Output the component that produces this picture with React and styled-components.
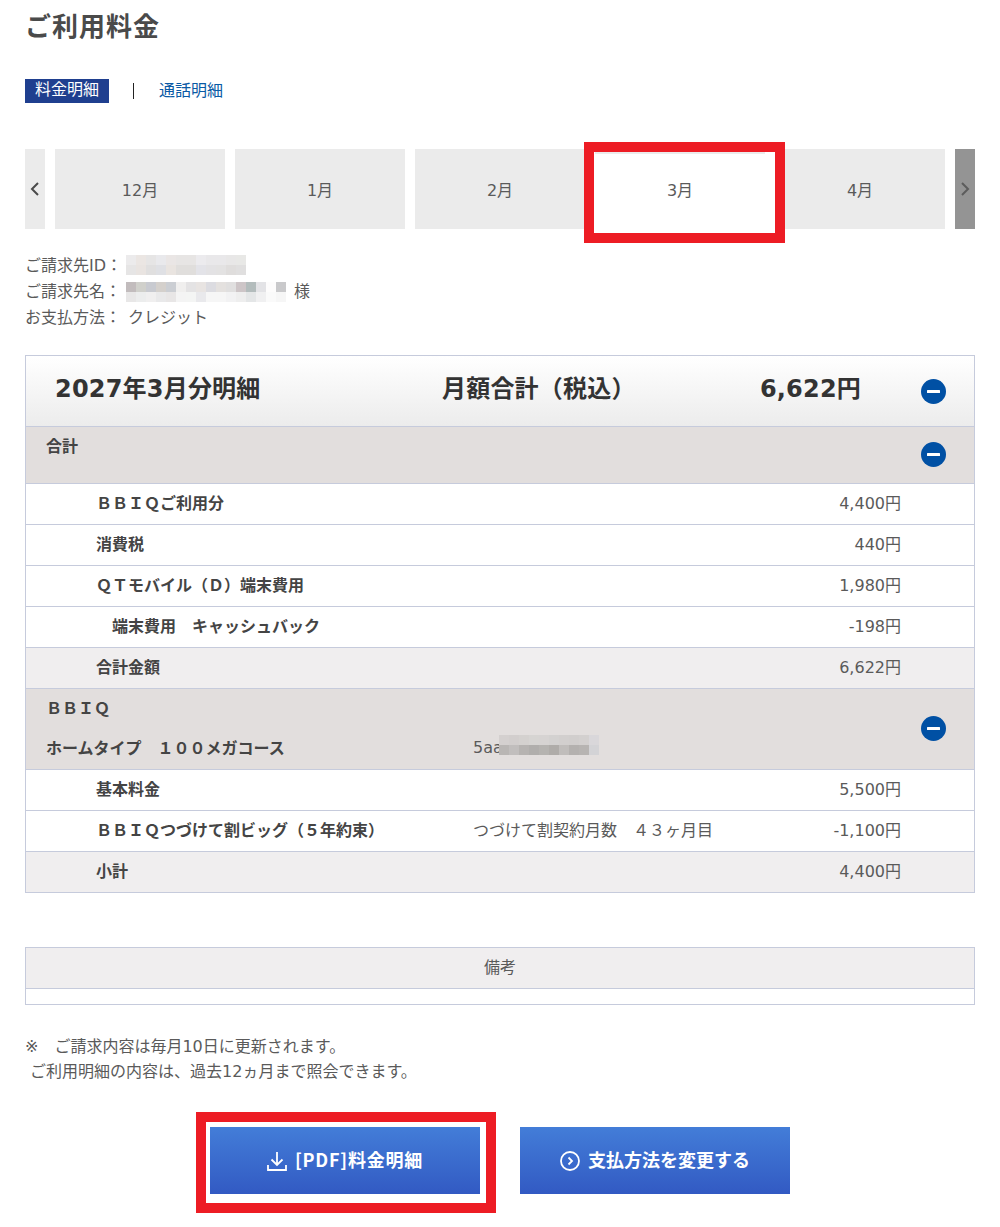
import React from "react";
import styled, { createGlobalStyle } from "styled-components";

const Global = createGlobalStyle`
  html, body { margin: 0; padding: 0; background: #fff; }
  body { font-family: "DejaVu Sans", "Noto Sans CJK JP", sans-serif; font-size: 16px; color: #555; }
`;

const Page = styled.div`
  width: 950px;
  height: 1227px;
  padding: 0 25px;
  overflow: hidden;
  font-family: "DejaVu Sans", "Noto Sans CJK JP", sans-serif;
  box-sizing: content-box;
`;
const Title = styled.h1`
  margin: 0;
  padding-top: 7px;
  height: 79px;
  box-sizing: border-box;
  font-size: 26px;
  line-height: 36px;
  font-weight: 700;
  letter-spacing: 1px;
  color: #4a4a4a;
  font-family: "Noto Sans CJK JP", sans-serif;
`;
const Tabs = styled.div`
  display: flex;
  align-items: center;
  height: 24px;
  font-size: 16px;
`;
const ActiveTab = styled.span`
  background: #1f3f8f;
  color: #fff;
  width: 84px;
  height: 24px;
  line-height: 21px;
  text-align: center;
`;
const Divider = styled.span`
  width: 1px;
  height: 16px;
  background: #222;
  margin: 0 25px 0 24px;
`;
const TabLink = styled.a`
  color: #0a5aa5;
  text-decoration: none;
  padding-bottom: 4px;
`;
const Carousel = styled.div`
  display: flex;
  gap: 10px;
  margin-top: 46px;
  height: 80px;
`;
const Arrow = styled.div`
  width: 20px;
  background: ${(p) => (p.$dark ? "#949494" : "#ebebeb")};
  display: flex;
  align-items: center;
  justify-content: center;
  color: ${(p) => (p.$dark ? "#5c5c5c" : "#4a4a4a")};
`;
const Month = styled.div`
  width: 170px;
  background: #ebebeb;
  display: flex;
  align-items: center;
  justify-content: center;
  font-size: 16px;
  color: #5a5a5a;
`;
const ActiveMonth = styled(Month)`
  position: relative;
  background: linear-gradient(#ebebeb 5px, #fff 5px);
  &::after {
    content: "";
    position: absolute;
    left: -11px;
    top: -7px;
    width: 201px;
    height: 101px;
    box-sizing: border-box;
    border: 10px solid #ed1c24;
  }
`;
const WhiteFill = styled.span`
  position: absolute;
  left: 170px;
  top: 3px;
  width: 10px;
  height: 81px;
  background: #fff;
`;
const Info = styled.div`
  margin-top: 24px;
  font-size: 16px;
  line-height: 26px;
  color: #5a5a5a;
`;
const InfoRow = styled.div`
  display: flex;
  align-items: center;
  height: 26px;
`;
const InfoMask = styled.span`
  display: block;
  margin-bottom: 2px;
`;
const InfoKey = styled.span`
  width: ${(p) => p.$w || 101}px;
  flex: none;
  font-size: 16px;
`;
const Honorific = styled.span`
  margin-left: 8px;
`;
const Panel = styled.div`
  margin-top: 24px;
  border: 1px solid #c6cbdc;
  border-bottom: 0;
`;
const PanelHead = styled.div`
  height: 70px;
  border-bottom: 1px solid #c6cbdc;
  background: linear-gradient(#ffffff, #ececec);
  display: grid;
  grid-template-columns: 387px 289px 130px 1fr;
  align-items: center;
  padding-left: 29px;
  font-size: 24px;
  font-weight: 700;
  color: #333;
  letter-spacing: 0.2px;
`;
const HeadCell = styled.div`
  padding-bottom: 9px;
  white-space: nowrap;
  text-align: ${(p) => (p.$right ? "right" : "left")};
`;
const IconCell = styled.div`
  display: flex;
  justify-content: flex-end;
  padding-right: 28px;
`;
const GroupRow = styled.div`
  position: relative;
  height: ${(p) => p.$h}px;
  background: #e2dedd;
  border-bottom: 1px solid #c6cbdc;
  padding-left: 20px;
  box-sizing: content-box;
  font-weight: 700;
  font-size: 16px;
  color: #444;
`;
const GroupLine = styled.div`
  display: grid;
  grid-template-columns: 427px 1fr;
  height: 40px;
  padding-bottom: 4px;
  box-sizing: border-box;
  align-items: center;
`;
const Addr = styled.span`
  display: flex;
  align-items: center;
  font-weight: 400;
  color: #5a5a5a;
`;
const AddrMask = styled.span`
  display: block;
  margin-left: -4px;
  margin-bottom: 4px;
`;
const MinusWrap = styled.span`
  position: absolute;
  right: 28px;
  top: ${(p) => p.$top}px;
  display: flex;
`;
const Row = styled.div`
  display: grid;
  grid-template-columns: ${(p) => 447 - (p.$indent ? 86 : 70)}px 1fr auto;
  height: 41px;
  box-sizing: border-box;
  align-items: center;
  padding: 0 73px 5px ${(p) => (p.$indent ? 86 : 70)}px;
  background: ${(p) => (p.$total ? "#f0eeef" : "#fff")};
  border-bottom: 1px solid #c6cbdc;
`;
const Label = styled.span`
  font-weight: 700;
  color: #444;
  white-space: nowrap;
`;
const Note = styled.span`
  color: #5a5a5a;
  white-space: nowrap;
`;
const Price = styled.span`
  color: #5a5a5a;
  white-space: nowrap;
`;
const Remarks = styled.div`
  margin-top: 54px;
  border: 1px solid #c6cbdc;
`;
const RemarksHead = styled.div`
  height: 40px;
  line-height: 40px;
  background: #f0eeef;
  border-bottom: 1px solid #c6cbdc;
  text-align: center;
  color: #5a5a5a;
`;
const RemarksBody = styled.div`
  height: 15px;
`;
const Notes = styled.div`
  margin-top: 29px;
  line-height: 25px;
  color: #5a5a5a;
  white-space: pre;
`;
const Actions = styled.div`
  display: flex;
  gap: 40px;
  margin-top: 43px;
  padding-left: 185px;
`;
const Button = styled.a`
  position: relative;
  width: 270px;
  height: 67px;
  display: flex;
  align-items: center;
  justify-content: center;
  gap: 8px;
  background: linear-gradient(#437dd8, #325ac3);
  color: #fff;
  font-family: "Noto Sans CJK JP", sans-serif;
  font-weight: 700;
  font-size: 18px;
  letter-spacing: ${(p) => p.$track || 0}px;
  padding-bottom: 4px;
  box-sizing: border-box;
`;
const Callout = styled.span`
  position: absolute;
  left: -14px;
  top: -15px;
  width: 300px;
  height: 101px;
  box-sizing: border-box;
  border: 10px solid #ed1c24;
`;
const ButtonIcon = styled.svg`
  flex: none;
  margin-top: 4px;
`;

const Minus = () => (
  <svg width="25" height="25" viewBox="0 0 25 25" aria-hidden="true">
    <circle cx="12.5" cy="12.5" r="12.5" fill="#0050a4" />
    <rect x="6" y="11" width="13" height="3" rx="0.5" fill="#fff" />
  </svg>
);
const Chevron = ({ right }) => (
  <svg width="12" height="16" viewBox="0 0 12 16" aria-hidden="true">
    <path d={right ? "M3 2l6 6-6 6" : "M9 2L3 8l6 6"} fill="none" stroke="currentColor" strokeWidth="2" />
  </svg>
);
const Mosaic = ({ rows, size = 10 }) => (
  <svg
    width={Math.max(...rows.map((r) => r.length)) * size}
    height={rows.length * size}
    style={{ display: "block", flex: "none" }}
    aria-hidden="true"
  >
    {rows.map((r, y) =>
      r.map((c, x) => <rect key={x} x={x * size} y={y * size} width={size} height={size} fill={c} />)
    )}
  </svg>
);

const idTiles = [
  ["#ecebec", "#ebe6e3", "#e6e5e5", "#e9e9ec", "#eae6e5", "#e7e5e4", "#e7e5e4", "#ecebee", "#e9e8ea", "#e9e8ea", "#e8e7e7", "#e8e8e6"],
  ["#e6e5e5", "#e9e4e1", "#e0dfdf", "#dfe0e4", "#e9e4e0", "#e0dedc", "#e0dedc", "#e3e3e8", "#e3e2e4", "#e3e2e2", "#dfdddc", "#e0dfdf"],
];
const nameTiles = [
  ["#c2bcbd", "#d0d0cb", "#c8cad0", "#d4d0cc", "#cbced3", "#f0efee", "#e4e3e4", "#e8e4e2", "#dcdce1", "#e4e1df", "#e0dfdf", "#cdc5c7", "#b3bcbc", "#e3e3e6", "#fdfcfc", "#c9c9cb"],
  ["#e8e7e7", "#eceded", "#f0efef", "#e9e9ea", "#e8e6e6", "#f4f4f4", "#f4f5f4", "#e9e9ec", "#f6f6f6", "#f6f6f6", "#f2f2f3", "#eeeeee", "#e4e6e7", "#f0f0f1", "#fafafa", "#f6f6f6"],
];
const addrTiles = [
  ["#d4d0cf", "#d2cecd", "#d4d1cf", "#d6d4d2", "#d6d3d2", "#d3d1d0", "#d2cfce", "#d1cecd", "#d3d0cf", "#d9d7da"],
  ["#b9b6b4", "#c1bebd", "#b6b3b1", "#b0aeac", "#b5b3b0", "#afaca9", "#c0bdbb", "#b4b1af", "#b7b4b2", "#d3d3d6"],
];

export default function App() {
  return (
    <Page>
      <Global />
      <Title>ご利用料金</Title>
      <Tabs>
        <ActiveTab>料金明細</ActiveTab>
        <Divider />
        <TabLink>通話明細</TabLink>
      </Tabs>
      <Carousel>
        <Arrow><Chevron /></Arrow>
        <Month>12月</Month>
        <Month>1月</Month>
        <Month>2月</Month>
        <ActiveMonth>3月<WhiteFill /></ActiveMonth>
        <Month>4月</Month>
        <Arrow $dark><Chevron right /></Arrow>
      </Carousel>
      <Info>
        <InfoRow><InfoKey>ご請求先ID：</InfoKey><InfoMask><Mosaic rows={idTiles} /></InfoMask></InfoRow>
        <InfoRow>
          <InfoKey>ご請求先名：</InfoKey>
          <Mosaic rows={nameTiles} />
          <Honorific>様</Honorific>
        </InfoRow>
        <InfoRow><InfoKey $w={103}>お支払方法：</InfoKey>クレジット</InfoRow>
      </Info>
      <Panel>
        <PanelHead>
          <HeadCell>2027年3月分明細</HeadCell>
          <HeadCell>月額合計（税込）</HeadCell>
          <HeadCell $right>6,622円</HeadCell>
          <IconCell><Minus /></IconCell>
        </PanelHead>
        <GroupRow $h={56}>
          <GroupLine>合計</GroupLine>
          <MinusWrap $top={15}><Minus /></MinusWrap>
        </GroupRow>
        <Row><Label>ＢＢＩＱご利用分</Label><span /><Price>4,400円</Price></Row>
        <Row><Label>消費税</Label><span /><Price>440円</Price></Row>
        <Row><Label>ＱＴモバイル（Ｄ）端末費用</Label><span /><Price>1,980円</Price></Row>
        <Row $indent><Label>端末費用　キャッシュバック</Label><span /><Price>-198円</Price></Row>
        <Row $total><Label>合計金額</Label><span /><Price>6,622円</Price></Row>
        <GroupRow $h={80}>
          <GroupLine>ＢＢＩＱ</GroupLine>
          <GroupLine>
            <span>ホームタイプ　１００メガコース</span>
            <Addr>5aa<AddrMask><Mosaic rows={addrTiles} /></AddrMask></Addr>
          </GroupLine>
          <MinusWrap $top={27}><Minus /></MinusWrap>
        </GroupRow>
        <Row><Label>基本料金</Label><span /><Price>5,500円</Price></Row>
        <Row><Label>ＢＢＩＱつづけて割ビッグ（５年約束）</Label><Note>つづけて割契約月数　４３ヶ月目</Note><Price>-1,100円</Price></Row>
        <Row $total><Label>小計</Label><span /><Price>4,400円</Price></Row>
      </Panel>
      <Remarks>
        <RemarksHead>備考</RemarksHead>
        <RemarksBody />
      </Remarks>
      <Notes>{"※　ご請求内容は毎月10日に更新されます。\n ご利用明細の内容は、過去12ヵ月まで照会できます。"}</Notes>
      <Actions>
        <Button $track={0.8}>
          <Callout />
          <ButtonIcon width="20" height="20" viewBox="0 0 20 20" fill="none" stroke="#fff" strokeWidth="1.8" aria-hidden="true">
            <path d="M10 1v13M4.5 8.500 10 14l5.500-5.500M1 14v5h18v-5" />
          </ButtonIcon>
          [PDF]料金明細
        </Button>
        <Button>
          <ButtonIcon width="20" height="20" viewBox="0 0 20 20" fill="none" stroke="#fff" strokeWidth="1.8" aria-hidden="true">
            <circle cx="10" cy="10" r="9" />
            <path d="M8.500 6.500 12 10l-3.500 3.500" />
          </ButtonIcon>
          支払方法を変更する
        </Button>
      </Actions>
    </Page>
  );
}
